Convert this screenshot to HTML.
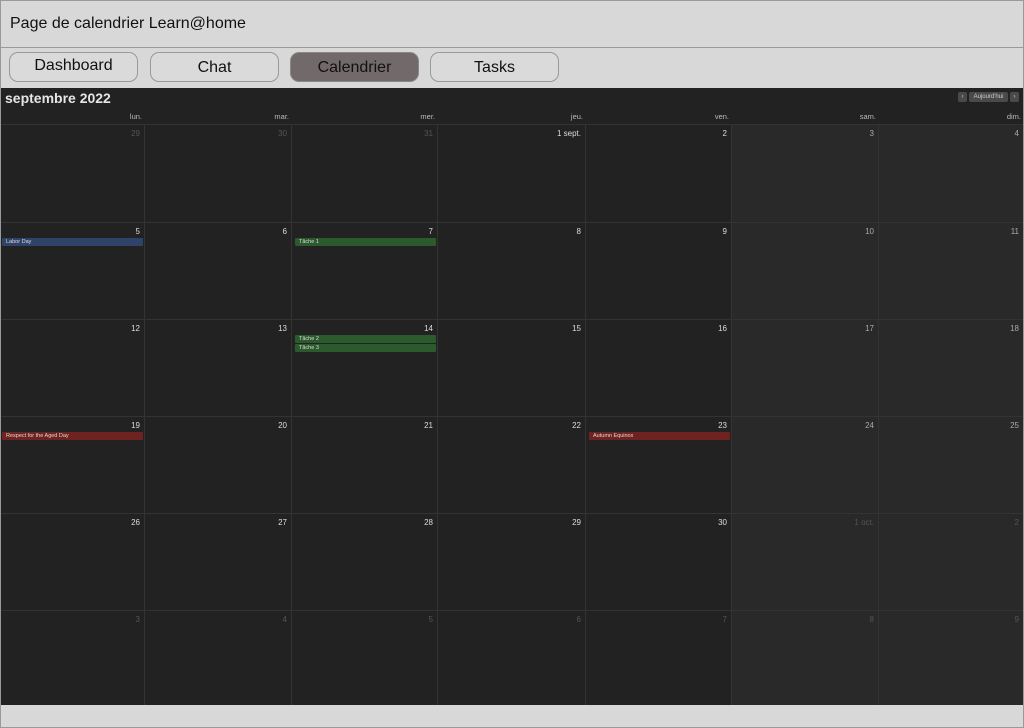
<!DOCTYPE html>
<html><head><meta charset="utf-8"><style>
*{margin:0;padding:0;box-sizing:border-box}
body{width:1024px;height:728px;position:relative;overflow:hidden;background:#d8d8d8;font-family:"Liberation Sans",sans-serif}
.frame{position:absolute;left:0;top:0;width:1024px;height:728px;border:1px solid #999;pointer-events:none;z-index:9}
.title{position:absolute;left:10px;top:15px;font-size:16px;color:#111}
.hline{position:absolute;left:0;top:47px;width:1024px;height:1px;background:#999}
.btn{position:absolute;top:52px;height:30px;width:129px;border:1px solid #999;border-radius:9px;background:#dadada;font-size:16px;color:#111;text-align:center;line-height:30px}
.cal{position:absolute;left:0;top:88px;width:1024px;height:617px;background:#222}
.mt{position:absolute;left:5px;top:2px;font-size:14px;font-weight:bold;color:#e6e6e6}
.nav{position:absolute;top:4px;height:10px;background:#4a4a4a;border-radius:2px;color:#ccc;font-size:6px;line-height:10px;text-align:center}
.dn{position:absolute;top:24px;font-size:7.5px;color:#bbb;text-align:right}
.c{position:absolute;border-right:1px solid #333;border-top:1px solid #333}
.c span{position:absolute;right:4px;top:4px;font-size:8px;color:#ddd}
.c.w span{color:#aaa}
.c.o span{color:#555}
.w{background:#292929}
.e{position:absolute;height:8px;border-radius:1px;font-size:5.5px;color:#ddd;line-height:8px;padding-left:4px;white-space:nowrap}
.b{background:#2f4268}.g{background:#2b5a2d}.r{background:#6e2320}
</style></head><body>
<div class="frame"></div>
<div class="title">Page de calendrier Learn@home</div>
<div class="hline"></div>
<div class="btn" style="left:9px;line-height:26px">Dashboard</div>
<div class="btn" style="left:150px">Chat</div>
<div class="btn" style="left:290px;background:#726a6a;border-color:#888">Calendrier</div>
<div class="btn" style="left:430px">Tasks</div>
<div class="cal">
<div class="mt">septembre 2022</div>
<div class="nav" style="left:958px;width:9px">&lsaquo;</div>
<div class="nav" style="left:969px;width:39px">Aujourd'hui</div>
<div class="nav" style="left:1010px;width:9px">&rsaquo;</div>
<div class="dn" style="left:0;width:142px">lun.</div>
<div class="dn" style="left:145px;width:144px">mar.</div>
<div class="dn" style="left:292px;width:143px">mer.</div>
<div class="dn" style="left:438px;width:145px">jeu.</div>
<div class="dn" style="left:586px;width:143px">ven.</div>
<div class="dn" style="left:732px;width:144px">sam.</div>
<div class="dn" style="left:879px;width:142px">dim.</div>
</div>
<div style="position:absolute;left:0;top:0">
<div class="c o" style="left:0;top:124px;width:145px;height:98px"><span>29</span></div>
<div class="c o" style="left:145px;top:124px;width:147px;height:98px"><span>30</span></div>
<div class="c o" style="left:292px;top:124px;width:146px;height:98px"><span>31</span></div>
<div class="c" style="left:438px;top:124px;width:148px;height:98px"><span>1 sept.</span></div>
<div class="c" style="left:586px;top:124px;width:146px;height:98px"><span>2</span></div>
<div class="c w" style="left:732px;top:124px;width:147px;height:98px"><span>3</span></div>
<div class="c w" style="left:879px;top:124px;width:145px;height:98px"><span>4</span></div>
<div class="c" style="left:0;top:222px;width:145px;height:97px"><span>5</span></div>
<div class="c" style="left:145px;top:222px;width:147px;height:97px"><span>6</span></div>
<div class="c" style="left:292px;top:222px;width:146px;height:97px"><span>7</span></div>
<div class="c" style="left:438px;top:222px;width:148px;height:97px"><span>8</span></div>
<div class="c" style="left:586px;top:222px;width:146px;height:97px"><span>9</span></div>
<div class="c w" style="left:732px;top:222px;width:147px;height:97px"><span>10</span></div>
<div class="c w" style="left:879px;top:222px;width:145px;height:97px"><span>11</span></div>
<div class="c" style="left:0;top:319px;width:145px;height:97px"><span>12</span></div>
<div class="c" style="left:145px;top:319px;width:147px;height:97px"><span>13</span></div>
<div class="c" style="left:292px;top:319px;width:146px;height:97px"><span>14</span></div>
<div class="c" style="left:438px;top:319px;width:148px;height:97px"><span>15</span></div>
<div class="c" style="left:586px;top:319px;width:146px;height:97px"><span>16</span></div>
<div class="c w" style="left:732px;top:319px;width:147px;height:97px"><span>17</span></div>
<div class="c w" style="left:879px;top:319px;width:145px;height:97px"><span>18</span></div>
<div class="c" style="left:0;top:416px;width:145px;height:97px"><span>19</span></div>
<div class="c" style="left:145px;top:416px;width:147px;height:97px"><span>20</span></div>
<div class="c" style="left:292px;top:416px;width:146px;height:97px"><span>21</span></div>
<div class="c" style="left:438px;top:416px;width:148px;height:97px"><span>22</span></div>
<div class="c" style="left:586px;top:416px;width:146px;height:97px"><span>23</span></div>
<div class="c w" style="left:732px;top:416px;width:147px;height:97px"><span>24</span></div>
<div class="c w" style="left:879px;top:416px;width:145px;height:97px"><span>25</span></div>
<div class="c" style="left:0;top:513px;width:145px;height:97px"><span>26</span></div>
<div class="c" style="left:145px;top:513px;width:147px;height:97px"><span>27</span></div>
<div class="c" style="left:292px;top:513px;width:146px;height:97px"><span>28</span></div>
<div class="c" style="left:438px;top:513px;width:148px;height:97px"><span>29</span></div>
<div class="c" style="left:586px;top:513px;width:146px;height:97px"><span>30</span></div>
<div class="c o w" style="left:732px;top:513px;width:147px;height:97px"><span>1 oct.</span></div>
<div class="c o w" style="left:879px;top:513px;width:145px;height:97px"><span>2</span></div>
<div class="c o" style="left:0;top:610px;width:145px;height:95px"><span>3</span></div>
<div class="c o" style="left:145px;top:610px;width:147px;height:95px"><span>4</span></div>
<div class="c o" style="left:292px;top:610px;width:146px;height:95px"><span>5</span></div>
<div class="c o" style="left:438px;top:610px;width:148px;height:95px"><span>6</span></div>
<div class="c o" style="left:586px;top:610px;width:146px;height:95px"><span>7</span></div>
<div class="c o w" style="left:732px;top:610px;width:147px;height:95px"><span>8</span></div>
<div class="c o w" style="left:879px;top:610px;width:145px;height:95px"><span>9</span></div>
</div>
<div class="e b" style="left:2px;top:238px;width:141px">Labor Day</div>
<div class="e g" style="left:295px;top:238px;width:141px">Tâche 1</div>
<div class="e g" style="left:295px;top:335px;width:141px">Tâche 2</div>
<div class="e g" style="left:295px;top:344px;width:141px">Tâche 3</div>
<div class="e r" style="left:2px;top:432px;width:141px">Respect for the Aged Day</div>
<div class="e r" style="left:589px;top:432px;width:141px">Autumn Equinox</div>
</body></html>
